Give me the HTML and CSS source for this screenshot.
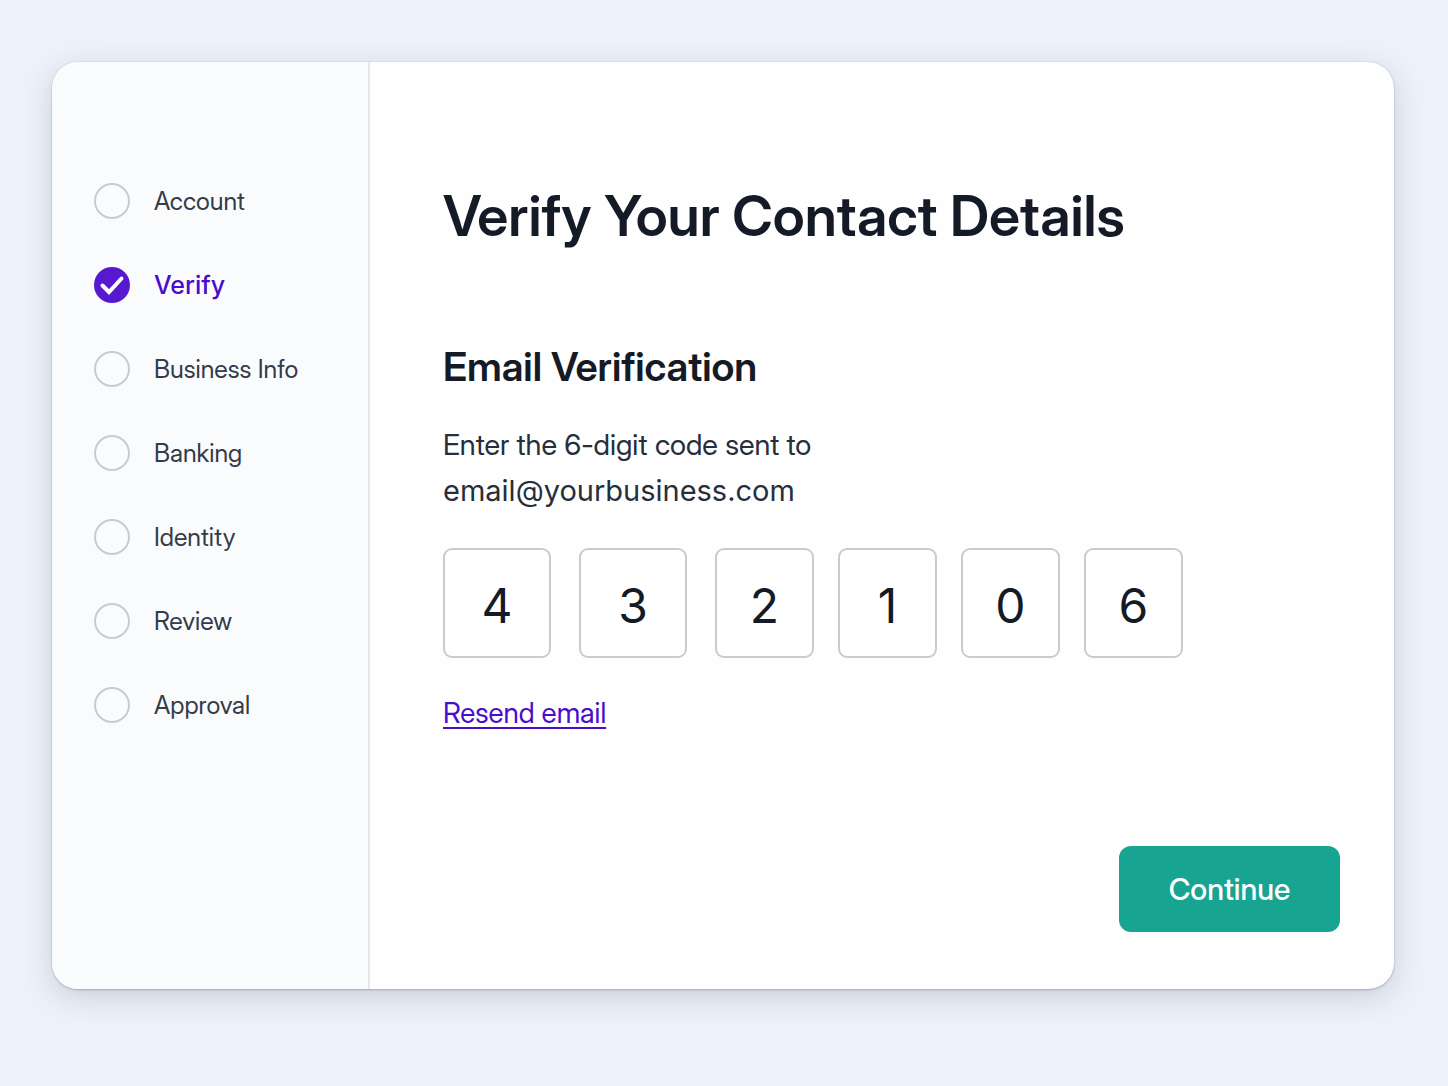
FILE: index.html
```html
<!DOCTYPE html>
<html lang="en">
<head>
<meta charset="utf-8">
<meta name="viewport" content="width=device-width, initial-scale=1">
<title>Verify Your Contact Details</title>
<link rel="stylesheet" href="styles.css">
</head>
<body>
<div class="card">
  <nav class="sidebar" aria-label="Progress">
    <ol class="steps">
      <li class="step"><span class="marker"></span>Account</li>
      <li class="step step-current" aria-current="step"><span class="marker"><svg viewBox="0 0 36 36" aria-hidden="true"><path d="M8.5 18.5l6.5 6.5L27.500 11.500"/></svg></span>Verify</li>
      <li class="step"><span class="marker"></span>Business Info</li>
      <li class="step"><span class="marker"></span>Banking</li>
      <li class="step"><span class="marker"></span>Identity</li>
      <li class="step"><span class="marker"></span>Review</li>
      <li class="step"><span class="marker"></span>Approval</li>
    </ol>
  </nav>
  <main class="content">
    <h1 class="title">Verify Your Contact Details</h1>
    <form class="form">
      <h2 class="subtitle">Email Verification</h2>
      <p class="hint">Enter the 6-digit code sent to</p>
      <p class="hint hint-email">email@yourbusiness.com</p>
      <div class="code" role="group" aria-label="Verification code">
        <input class="digit digit-wide" type="text" inputmode="numeric" maxlength="1" value="4" aria-label="Digit 1">
        <input class="digit digit-wide" type="text" inputmode="numeric" maxlength="1" value="3" aria-label="Digit 2">
        <input class="digit" type="text" inputmode="numeric" maxlength="1" value="2" aria-label="Digit 3">
        <input class="digit" type="text" inputmode="numeric" maxlength="1" value="1" aria-label="Digit 4">
        <input class="digit" type="text" inputmode="numeric" maxlength="1" value="0" aria-label="Digit 5">
        <input class="digit" type="text" inputmode="numeric" maxlength="1" value="6" aria-label="Digit 6">
      </div>
      <a class="resend" href="#">Resend email</a>
      <button class="continue" type="submit">Continue</button>
    </form>
  </main>
</div>
</body>
</html>
```
FILE: styles.css
```css
* {
  box-sizing: border-box;
}

body {
  margin: 0;
  min-height: 100vh;
  padding: 62px 54px 97px 52px;
  display: flex;
  background: #edf1f9;
  color: #141b26;
  font-family: "Inter Display", Inter, "Liberation Sans", sans-serif;
}

h1, h2, p, ol {
  margin: 0;
  padding: 0;
}

.card {
  flex: 1;
  display: flex;
  overflow: hidden;
  border-radius: 26px;
  background: #fefefe;
  box-shadow: 0 0 1px rgba(60, 75, 100, 0.3), 0 1px 2px rgba(60, 75, 100, 0.3), 0 8px 28px rgba(60, 75, 100, 0.2);
}

.sidebar {
  flex: 0 0 318px;
  padding: 121px 24px 0 42px;
  border-right: 2px solid #e4e7ec;
  background: #fafbfd;
}

.steps {
  display: grid;
  gap: 48px;
  list-style: none;
}

.step {
  display: flex;
  align-items: center;
  gap: 24px;
  height: 36px;
  color: #343b49;
  font-size: 25px;
  white-space: nowrap;
}

.step-current {
  color: #4a0ccc;
  font-family: Inter, "Liberation Sans", sans-serif;
  font-weight: 500;
}

.marker {
  width: 36px;
  height: 36px;
  border: 2px solid #c9cbd1;
  border-radius: 50%;
}

.step-current .marker {
  border: 0;
  background: #5719cf;
}

.marker svg {
  display: block;
  fill: none;
  stroke: #fff;
  stroke-width: 4;
  stroke-linecap: round;
}

.content {
  flex: 1;
  display: flex;
  flex-direction: column;
  padding: 118px 54px 57px 73px;
}

.title {
  font-size: 56px;
  font-weight: 600;
  line-height: 72px;
}

.form {
  flex: 1;
  display: flex;
  flex-direction: column;
  align-items: flex-start;
  padding-top: 89px;
}

.subtitle {
  margin-bottom: 29px;
  font-size: 40px;
  font-weight: 600;
  line-height: 52px;
}

.hint {
  color: #272e3b;
  font-size: 29px;
  line-height: 46px;
}

.hint-email {
  font-family: Inter, "Liberation Sans", sans-serif;
}

.code {
  display: flex;
  gap: 24px;
  margin: 34px 0 32px;
}

.digit {
  width: 99px;
  height: 110px;
  padding: 4px 0 0;
  border: 2px solid #c9cbd3;
  border-radius: 9px;
  background: #fff;
  color: #141b26;
  font-family: Inter, "Liberation Sans", sans-serif;
  font-size: 48px;
  text-align: center;
}

.digit-wide {
  width: 108px;
  margin-right: 4px;
}

.resend {
  color: #4a0ccc;
  font-size: 28px;
  line-height: 46px;
  text-decoration-thickness: 2px;
  text-underline-offset: 4px;
  text-decoration-skip-ink: none;
}

.continue {
  align-self: flex-end;
  width: 221px;
  height: 86px;
  margin-top: auto;
  border: 0;
  border-radius: 12px;
  background: #17a491;
  color: #fff;
  font: inherit;
  font-size: 30px;
  font-weight: 500;
}
```
